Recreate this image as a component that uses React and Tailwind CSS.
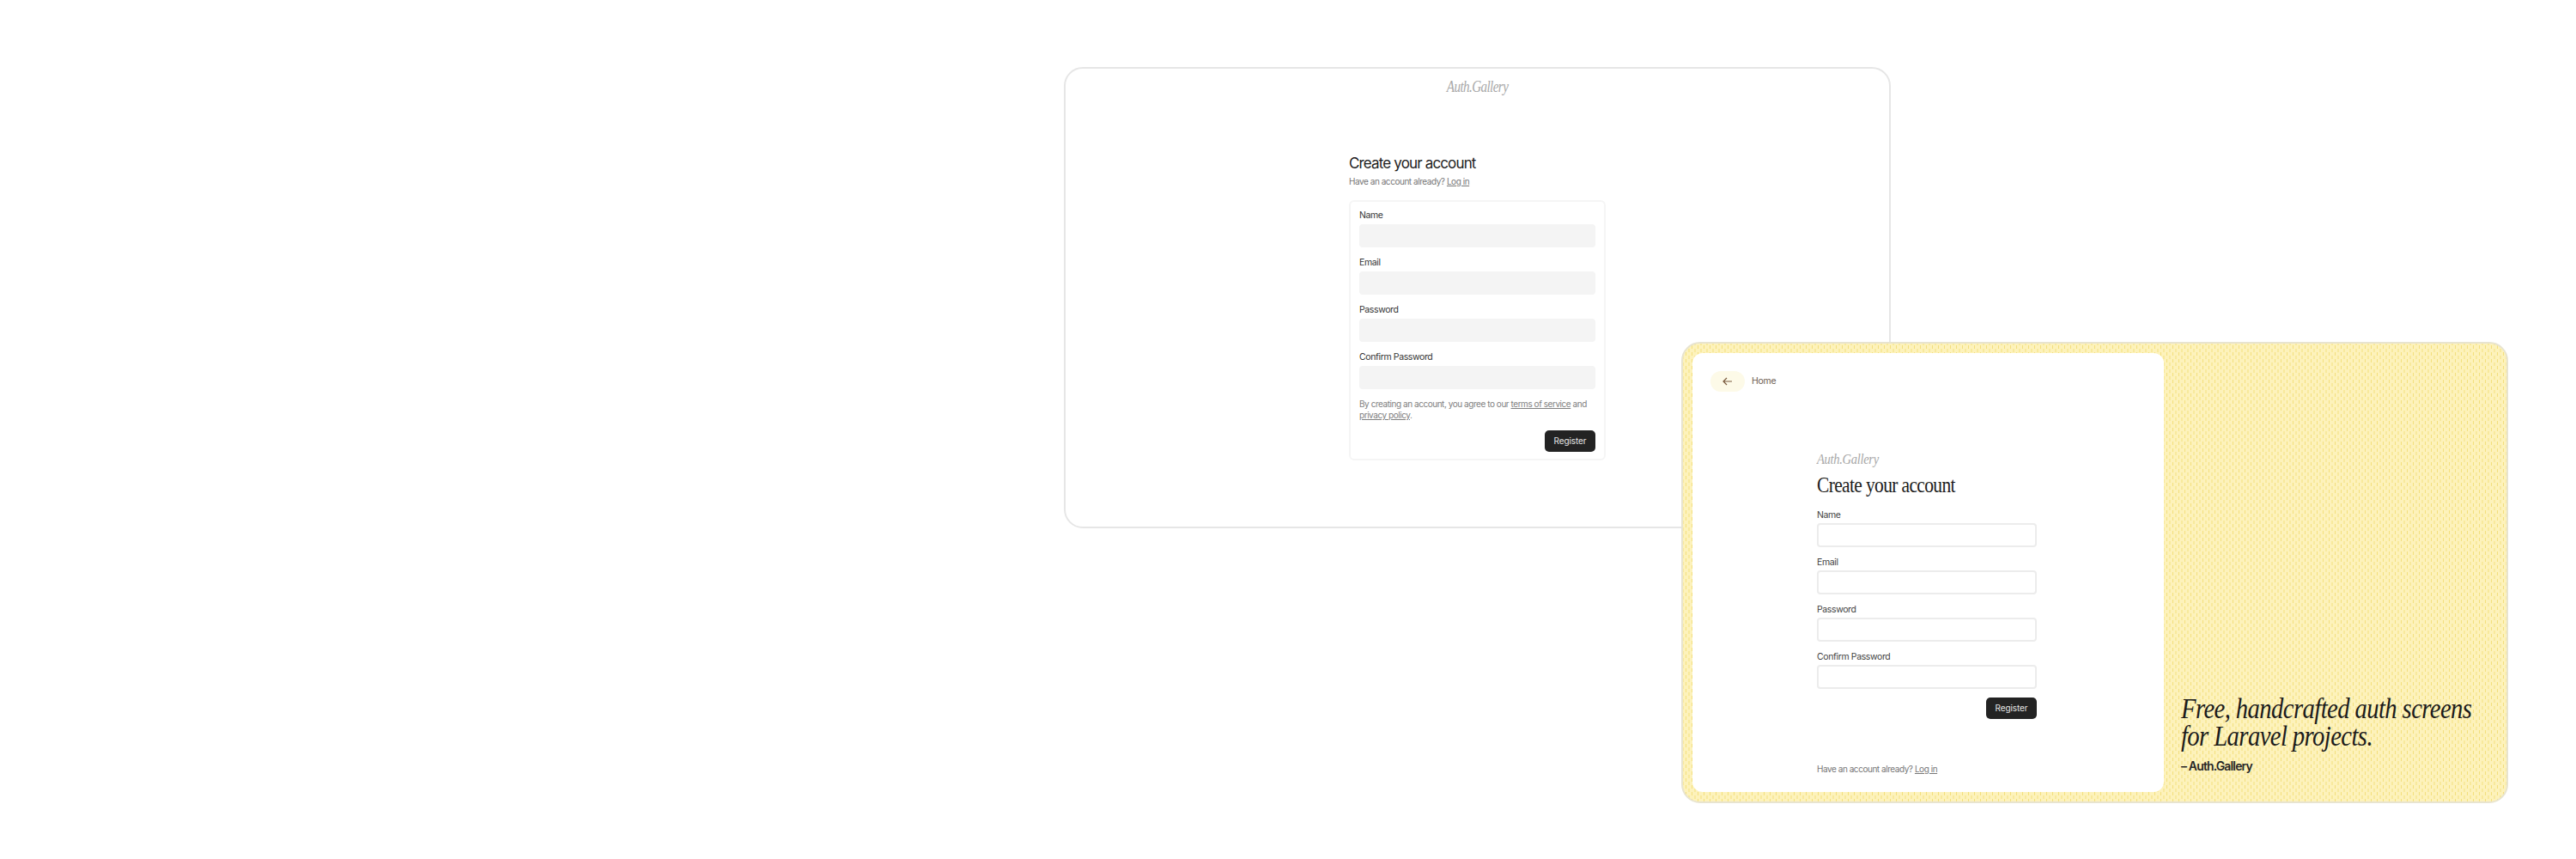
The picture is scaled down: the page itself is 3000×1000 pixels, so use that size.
const sans = "font-['Inter',sans-serif]";
const serif = "font-['Liberation_Serif',serif]";

function Field({ label, boxed }) {
  return (
    <div className="flex flex-col">
      <label className={boxed ? "text-[10.5px] leading-[14px] tracking-[-0.38px] text-[#3f3f3f] mb-[2px]" : "text-[10.5px] leading-[14px] tracking-[-0.38px] text-[#333] mb-[3px]"}>{label}</label>
      <div className={boxed ? "h-[28px] rounded-[4px] border-2 border-[#ececec] bg-white" : "h-[27px] rounded-[4px] bg-[#f4f4f4]"} />
    </div>
  );
}

const Btn = () => (
  <button className="h-[25px] w-[59px] rounded-[5px] bg-[#232323] text-[10px] tracking-[-0.1px] text-[#e8e8e8]">Register</button>
);

const Sub = ({ className }) => (
  <p className={`text-[10px] leading-[14px] tracking-[-0.45px] text-[#777] ${className}`}>Have an account already? <a className="underline">Log in</a></p>
);

export default function App() {
  return (
    <div className={`relative h-[1000px] w-[3000px] overflow-hidden bg-white ${sans}`}>
      <section className="absolute left-[1239px] top-[78px] flex h-[537px] w-[963px] flex-col items-center rounded-[22px] border-2 border-[#e6e6e6] bg-white">
        <div className={`mt-[10px] scale-x-[0.84] whitespace-nowrap text-[18px] italic leading-[22px] tracking-[-0.7px] text-[#a8a8a8] ${serif}`}>Auth.Gallery</div>
        <div className="mt-[66px] w-[299px]">
          <h1 className="text-[17px] leading-[24px] tracking-[-0.85px] text-[#1c1c1c]">Create your account</h1>
          <Sub className="mt-[2px]" />
          <div className="mt-[15px] flex h-[303px] flex-col rounded-[6px] border-2 border-[#f5f5f5] px-[10px] pt-[9px]">
            <div className="flex flex-col gap-[11px]">
              <Field label="Name" />
              <Field label="Email" />
              <Field label="Password" />
              <Field label="Confirm Password" />
            </div>
            <p className="mt-[11px] text-[10px] leading-[13px] tracking-[-0.45px] text-[#808080]">By creating an account, you agree to our <a className="underline">terms of service</a> and <a className="underline">privacy policy</a>.</p>
            <div className="mt-[11px] flex justify-end"><Btn /></div>
          </div>
        </div>
      </section>

      <section className="absolute left-[1958px] top-[398px] flex h-[537px] w-[963px] rounded-[22px] border-2 border-[#e8e4d0] bg-[#fdf2bb] bg-[radial-gradient(ellipse_1px_2.5px_at_center,#f3df7c_60%,transparent_100%),radial-gradient(ellipse_1px_2.5px_at_center,#f3df7c_60%,transparent_100%)] bg-[length:7px_8px] bg-[position:0_0,3.5px_4px] p-[11px]">
        <div className="flex h-[511px] w-[549px] shrink-0 flex-col rounded-[12px] bg-white">
          <div className="ml-[21px] mt-[21px] flex items-center gap-[8px]">
            <div className="flex h-[24px] w-[40px] items-center justify-center rounded-full bg-[#fdfae8]">
              <svg width="12" height="10" viewBox="0 0 12 10" fill="none" stroke="#7a5a3e" strokeWidth="1.2"><path d="M11 5H1M5 1 1 5l4 4" /></svg>
            </div>
            <span className="text-[10.5px] tracking-[-0.3px] text-[#6b5a4e]">Home</span>
          </div>
          <div className="ml-[145px] mt-[69px] w-[256px]">
            <div className={`origin-left scale-x-[0.86] whitespace-nowrap text-[17px] italic leading-[20px] tracking-[-0.4px] text-[#a8a8a8] ${serif}`}>Auth.Gallery</div>
            <h1 className={`mt-[5px] origin-left scale-x-[0.86] whitespace-nowrap text-[25px] leading-[30px] tracking-[-0.75px] text-[#1c1c1c] ${serif}`}>Create your account</h1>
            <div className="mt-[13px] flex flex-col gap-[11px]">
              <Field boxed label="Name" />
              <Field boxed label="Email" />
              <Field boxed label="Password" />
              <Field boxed label="Confirm Password" />
            </div>
            <div className="mt-[10px] flex justify-end"><Btn /></div>
            <Sub className="mt-[51px]" />
          </div>
        </div>
        <div className="ml-[20px] mt-[398px] flex flex-col">
          <p className={`origin-left scale-x-[0.87] whitespace-nowrap text-[33px] italic leading-[32px] tracking-[-0.7px] text-[#1c1c1c] ${serif}`}>Free, handcrafted auth screens<br />for Laravel projects.</p>
          <p className="mt-[10px] whitespace-nowrap text-[14px] font-semibold leading-[18px] tracking-[-0.85px] text-[#262626]">– Auth.Gallery</p>
        </div>
      </section>
    </div>
  );
}
